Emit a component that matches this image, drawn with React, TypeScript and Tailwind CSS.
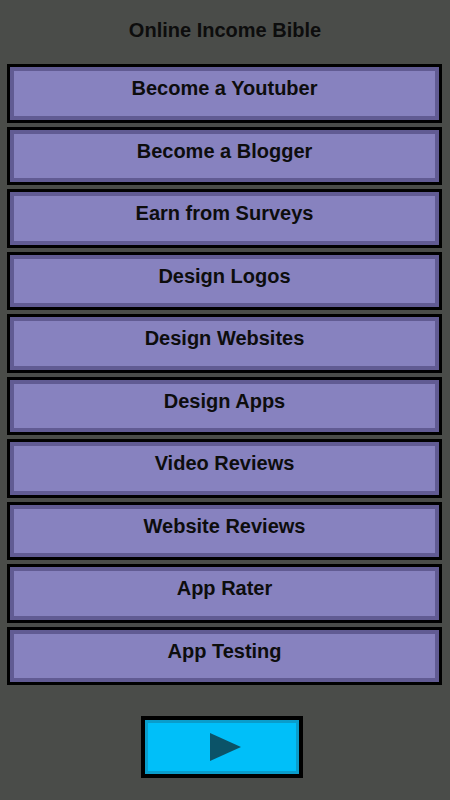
import React from "react";

const items = [
  "Become a Youtuber",
  "Become a Blogger",
  "Earn from Surveys",
  "Design Logos",
  "Design Websites",
  "Design Apps",
  "Video Reviews",
  "Website Reviews",
  "App Rater",
  "App Testing",
];

export default function App() {
  return (
    <div className="min-h-[800px] w-[450px] bg-[#4a4c49] font-['Liberation_Sans',Arial,sans-serif] flex flex-col">
      <div className="h-[64px] pt-[19px] text-center text-[20px] leading-[23px] font-bold text-[#0d0d0d]">
        Online Income Bible
      </div>
      <div className="flex flex-col gap-[4px] pl-[7px] pr-[8px]">
        {items.map((t) => (
          <div
            key={t}
            className="h-[58.5px] border-[3px] border-black bg-[#615b93] p-[4px] flex"
          >
            <div className="flex-1 bg-[#8782bf] pt-[6px] text-center text-[20px] leading-[23px] font-bold text-[#0d0d0d]">
              {t}
            </div>
          </div>
        ))}
      </div>
      <div className="flex justify-center pt-[31px] pr-[6px]">
        <div className="w-[162px] h-[62px] border-[4px] border-black bg-[#0a9dcb] p-[3px] flex">
          <div className="flex-1 bg-[#00bff9] flex items-center justify-center">
            <svg className="ml-[6px]" width="31" height="28" viewBox="0 0 31 28">
              <polygon points="0,0 31,14 0,28" fill="#0b5368" />
            </svg>
          </div>
        </div>
      </div>
    </div>
  );
}
